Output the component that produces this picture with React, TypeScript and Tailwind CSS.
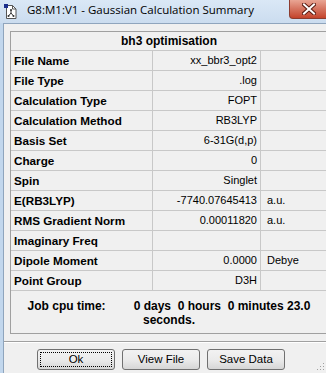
import React from "react";

const rows: { label: string; value: string; unit?: string }[] = [
  { label: "File Name", value: "xx_bbr3_opt2" },
  { label: "File Type", value: ".log" },
  { label: "Calculation Type", value: "FOPT" },
  { label: "Calculation Method", value: "RB3LYP" },
  { label: "Basis Set", value: "6-31G(d,p)" },
  { label: "Charge", value: "0" },
  { label: "Spin", value: "Singlet" },
  { label: "E(RB3LYP)", value: "-7740.07645413", unit: "a.u." },
  { label: "RMS Gradient Norm", value: "0.00011820", unit: "a.u." },
  { label: "Imaginary Freq", value: "" },
  { label: "Dipole Moment", value: "0.0000", unit: "Debye" },
  { label: "Point Group", value: "D3H" },
];

function AppIcon() {
  return (
    <svg width="14" height="16" viewBox="0 0 14 16" className="shrink-0">
      <path d="M2.5 1.5h6l3.5 3.5v9.5h-9.5z" fill="#fff" stroke="#555" />
      <path d="M8.5 1.5v3.5h3.5" fill="none" stroke="#555" />
      <rect x="0" y="0" width="4" height="4" fill="#1c2f8c" />
      <path d="M7 6v3M7 9l-2.5 3M7 9l2.5 3" stroke="#333" strokeWidth="1" fill="none" />
      <circle cx="7" cy="6" r="1" fill="#333" />
      <circle cx="4.5" cy="12" r="1" fill="#333" />
      <circle cx="9.5" cy="12" r="1" fill="#333" />
    </svg>
  );
}

function CloseButton() {
  return (
    <div className="absolute right-[-8px] top-0 w-[45px] h-[19px] rounded-b-[4px] border border-t-0 border-[#8c3c2f] bg-gradient-to-b from-[#e9a594] via-[#d5735f] to-[#c4432b] flex items-center justify-center">
      <svg width="14" height="12" viewBox="0 0 14 12" className="ml-[-6px]">
        <path d="M2 1.5l10 9M12 1.5l-10 9" stroke="#5a1a10" strokeWidth="4" strokeLinecap="square" />
        <path d="M2 1.5l10 9M12 1.5l-10 9" stroke="#fff" strokeWidth="2" strokeLinecap="square" />
      </svg>
    </div>
  );
}

function WinButton({ label, focused }: { label: string; focused?: boolean }) {
  return (
    <button className="w-[78px] h-[21px] rounded-[3px] border border-[#707070] bg-gradient-to-b from-[#f2f2f2] via-[#ebebeb] to-[#d6d6d6] p-[2px] text-[11.5px] text-black">
      <span
        className={
          focused
            ? "flex h-full items-center justify-center border border-dotted border-black"
            : "flex h-full items-center justify-center border border-transparent"
        }
      >
        {label}
      </span>
    </button>
  );
}

export default function App() {
  return (
    <div className="relative w-[326px] h-[373px] overflow-hidden bg-[#c2d7ed] font-['Liberation_Sans',Arial,sans-serif] text-black">
      {/* title bar */}
      <div className="relative h-[23px] flex items-center gap-[9px] pl-[4px] bg-gradient-to-b from-[#dae8f6] to-[#cbdcef]">
        <AppIcon />
        <span className="text-[11.5px] font-['Open_Sans',sans-serif] text-black leading-none pb-[3px]">
          G8:M1:V1 - Gaussian Calculation Summary
        </span>
        <CloseButton />
      </div>

      <div className="ml-[3px] h-[350px] border-l border-t border-[#8fa5bd] bg-[#f0f0f0] pl-[6px] pt-[7px]">
        {/* summary panel */}
        <div className="w-[318px] border border-[#a0a0a0]">
          <div className="h-[19px] border-b border-[#c8c8c8] flex items-center justify-center text-[12px] font-bold">
            bh3 optimisation
          </div>
          {rows.map((r) => (
            <div key={r.label} className="flex h-[20px] border-b border-[#c8c8c8] text-[11px]">
              <div className="w-[142px] border-r border-[#c8c8c8] pl-[3px] flex items-center font-bold text-[11.7px]">
                {r.label}
              </div>
              <div className="w-[108px] border-r border-[#c8c8c8] pr-[3px] flex items-center justify-end">
                {r.value}
              </div>
              <div className="flex-1 pl-[6px] flex items-center">{r.unit}</div>
            </div>
          ))}
          <div className="h-[42px] pt-[8px] text-center text-[12px] font-bold leading-[14px]">
            <span>Job cpu time:</span>
            <span className="ml-[28px] whitespace-pre">{"0 days  0 hours  0 minutes 23.0"}</span>
            <br />
            <span>seconds.</span>
          </div>
        </div>

        {/* separator */}
        <div className="mt-[7px] ml-[-6px] border-t border-[#a0a0a0] border-b border-b-white" />

        {/* buttons */}
        <div className="flex gap-[7px] pl-[27px] pt-[6px]">
          <WinButton label="Ok" focused />
          <WinButton label="View File" />
          <WinButton label="Save Data" />
        </div>
      </div>

      {/* size grip */}
      <svg width="10" height="10" viewBox="0 0 10 10" className="absolute right-[1px] bottom-[2px]">
        {[
          [8, 2],
          [8, 5],
          [5, 5],
          [8, 8],
          [5, 8],
          [2, 8],
        ].map(([x, y]) => (
          <rect key={`${x}-${y}`} x={x} y={y} width="1" height="1" fill="#a0a0a0" />
        ))}
      </svg>
    </div>
  );
}
